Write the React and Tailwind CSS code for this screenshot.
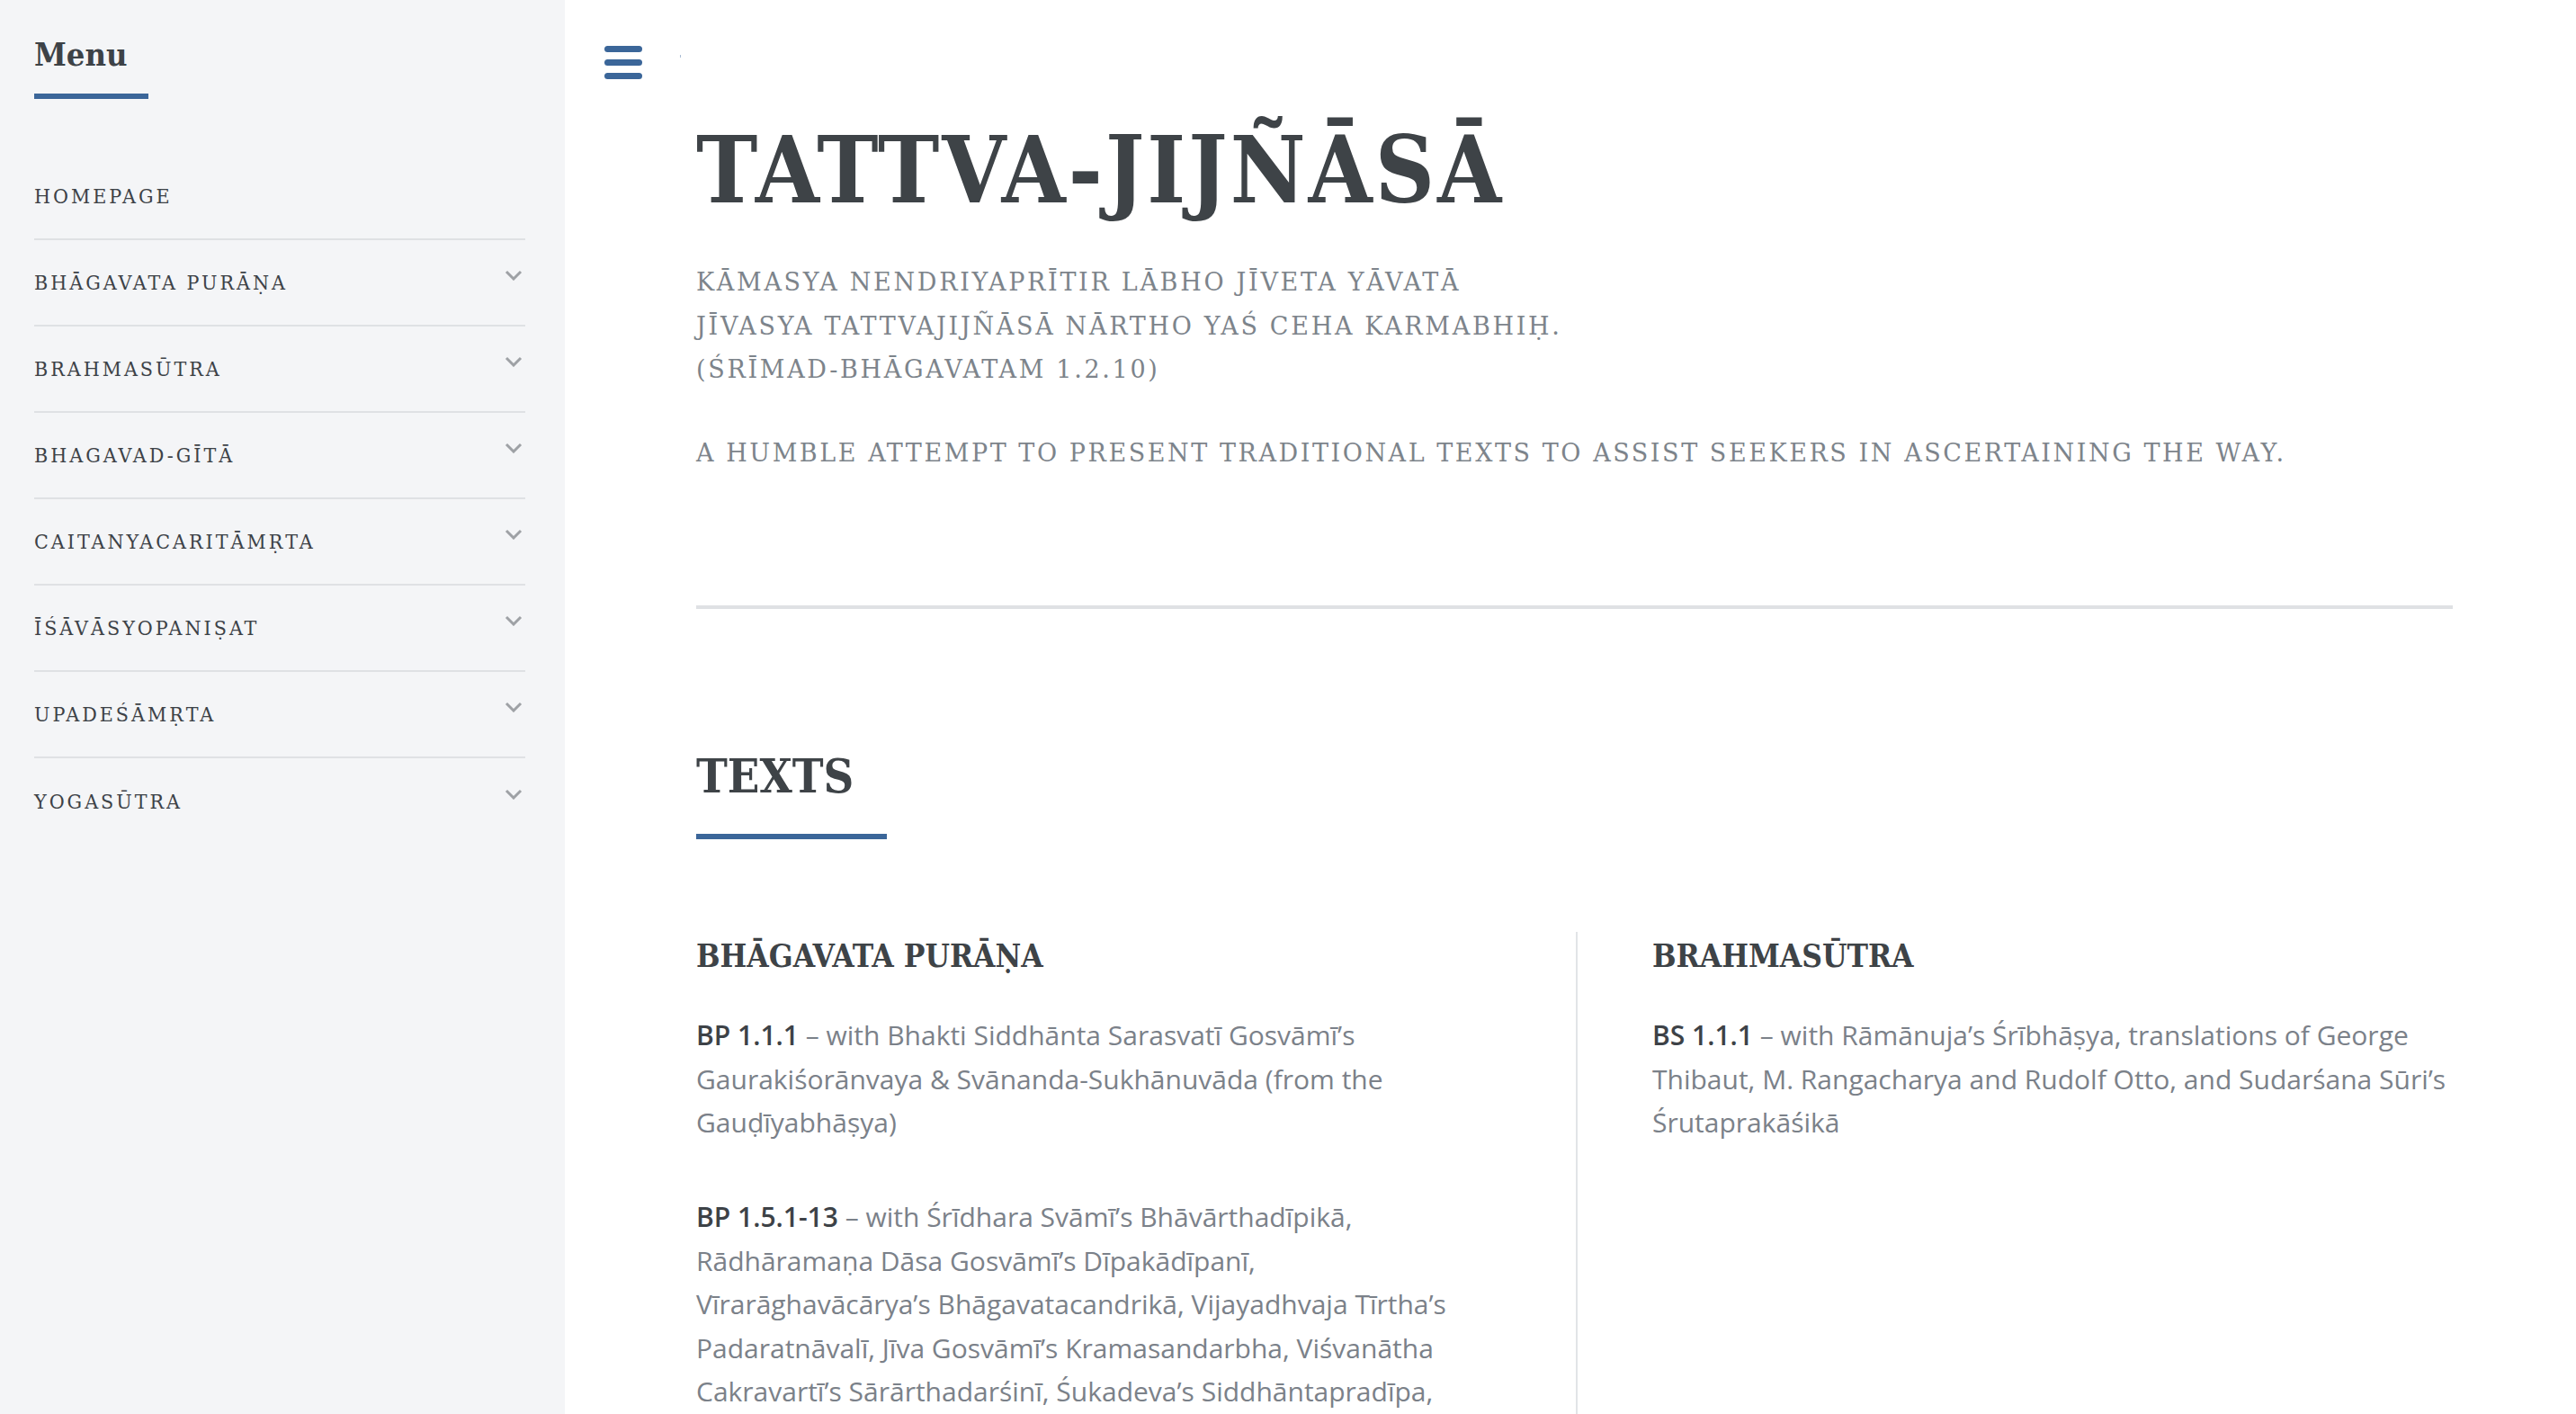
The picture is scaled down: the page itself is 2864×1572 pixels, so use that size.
const slab = "font-['DejaVu_Serif_Condensed','DejaVu_Serif',serif] font-stretch-condensed";
const serif = "font-['DejaVu_Serif',serif]";
const sans = "font-['Open_Sans','Noto_Sans',sans-serif]";

const menuItems = [
  { label: "HOMEPAGE", sub: false },
  { label: "BHĀGAVATA PURĀṆA", sub: true },
  { label: "BRAHMASŪTRA", sub: true },
  { label: "BHAGAVAD-GĪTĀ", sub: true },
  { label: "CAITANYACARITĀMṚTA", sub: true },
  { label: "ĪŚĀVĀSYOPANIṢAT", sub: true },
  { label: "UPADEŚĀMṚTA", sub: true },
  { label: "YOGASŪTRA", sub: true },
];

const Chevron = () => (
  <svg width="20" height="12" viewBox="0 0 20 12" className="mt-[-16px] mr-[3px] shrink-0">
    <polyline points="2,2 10,10 18,2" fill="none" stroke="#9ea1a5" strokeWidth="3" />
  </svg>
);

const Sidebar = () => (
  <aside className="w-[628px] shrink-0 bg-[#f4f5f7] min-h-screen pl-[38px] pr-[44px] pt-[40px]">
    <h2 className={`${slab} font-bold text-[36px] leading-[40px] text-[#3d4247]`}>Menu</h2>
    <div className="mt-[24px] h-[6px] w-[127px] bg-[#3b6699]" />
    <nav className="mt-[61px]">
      {menuItems.map((item, i) => (
        <div
          key={item.label}
          className={`h-[96px] flex items-center justify-between ${
            i < menuItems.length - 1 ? "border-b-2 border-[#dfe1e4]" : ""
          }`}
        >
          <span className={`${slab} text-[23px] tracking-[0.13em] text-[#3d4247]`}>{item.label}</span>
          {item.sub && <Chevron />}
        </div>
      ))}
    </nav>
  </aside>
);

const Entry = ({ label, children, className = "" }) => (
  <div className={`${sans} text-[30px] leading-[48.5px] text-[#7b8189] ${className}`}>
    <b className="font-semibold text-[#3d4247]">{label}</b>{" "}
    <span>– {children}</span>
  </div>
);

export default function App() {
  return (
    <div className="flex min-h-screen bg-white overflow-hidden">
      <Sidebar />
      <main className="flex-1 pt-[51px]">
        <div className="ml-[44px] flex items-start gap-[42px]">
          <div className="flex flex-col gap-[8px]">
            <span className="block h-[7px] w-[42px] rounded-full bg-[#3b6699]" />
            <span className="block h-[7px] w-[42px] rounded-full bg-[#3b6699]" />
            <span className="block h-[7px] w-[42px] rounded-full bg-[#3b6699]" />
          </div>
          <span className="mt-[10px] block h-[3px] w-[1px] bg-[#a9bcd3]" />
        </div>

        <div className="ml-[146px] mr-[137px]">
          <h1 className={`${slab} mt-[46px] font-bold text-[102px] leading-[110px] tracking-[3px] text-[#3e4347]`}>
            TATTVA-JIJÑĀSĀ
          </h1>
          <div className={`${serif} mt-[46px] text-[27px] leading-[48.5px] tracking-[0.1em] text-[#7d848b]`}>
            <p>KĀMASYA NENDRIYAPRĪTIR LĀBHO JĪVETA YĀVATĀ</p>
            <p>JĪVASYA TATTVAJIJÑĀSĀ NĀRTHO YAŚ CEHA KARMABHIḤ.</p>
            <p>(ŚRĪMAD-BHĀGAVATAM 1.2.10)</p>
          </div>
          <p className={`${serif} mt-[44.5px] text-[27px] leading-[48px] tracking-[0.095em] text-[#7d848b]`}>
            A HUMBLE ATTEMPT TO PRESENT TRADITIONAL TEXTS TO ASSIST SEEKERS IN ASCERTAINING THE WAY.
          </p>

          <div className="mt-[145px] h-[4px] bg-[#dfe1e4]" />

          <h2 className={`${slab} mt-[156px] font-bold text-[52px] leading-[60px] text-[#3e4347]`}>TEXTS</h2>
          <div className="mt-[34px] h-[6px] w-[212px] bg-[#3b6699]" />

          <div className="mt-[103px] grid grid-cols-[978px_2px_1fr] pb-[400px]">
            <section className="pr-[118px]">
              <h3 className={`${slab} mt-[7px] font-bold text-[35px] leading-[40px] text-[#3e4347]`}>
                BHĀGAVATA PURĀṆA
              </h3>
              <Entry label="BP 1.1.1" className="mt-[44px]">
                with Bhakti Siddhānta Sarasvatī Gosvāmī’s Gaurakiśorānvaya &amp; Svānanda-Sukhānuvāda (from the
                Gauḍīyabhāṣya)
              </Entry>
              <Entry label="BP 1.5.1-13" className="mt-[56.5px]">
                with Śrīdhara Svāmī’s Bhāvārthadīpikā, Rādhāramaṇa Dāsa Gosvāmī’s Dīpakādīpanī, Vīrarāghavācārya’s
                Bhāgavatacandrikā, Vijayadhvaja Tīrtha’s Padaratnāvalī, Jīva Gosvāmī’s Kramasandarbha, Viśvanātha
                Cakravartī’s Sārārthadarśinī, Śukadeva’s Siddhāntapradīpa,
              </Entry>
            </section>
            <div className="bg-[#e2e4e7]" />
            <section className="pl-[83px]">
              <h3 className={`${slab} mt-[7px] font-bold text-[35px] leading-[40px] text-[#3e4347]`}>
                BRAHMASŪTRA
              </h3>
              <Entry label="BS 1.1.1" className="mt-[44px]">
                with Rāmānuja’s Śrībhāṣya, translations of George Thibaut, M. Rangacharya and Rudolf Otto, and
                Sudarśana Sūri’s Śrutaprakāśikā
              </Entry>
            </section>
          </div>
        </div>
      </main>
    </div>
  );
}
